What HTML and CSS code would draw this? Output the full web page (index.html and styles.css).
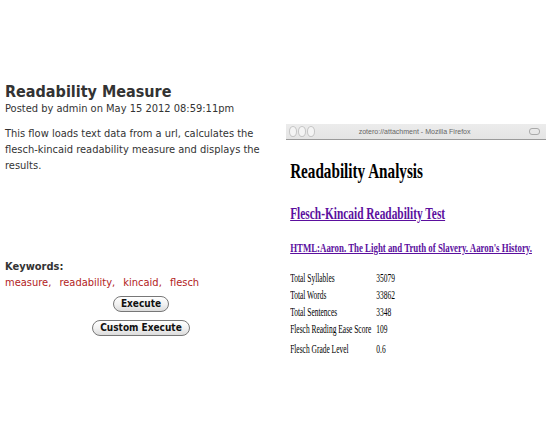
FILE: index.html
```html
<!DOCTYPE html>
<html>
<head>
<meta charset="utf-8">
<link rel="stylesheet" href="styles.css">
</head>
<body>
<div class="page">
  <div class="left">
    <h1 class="title">Readability Measure</h1>
    <div class="posted">Posted by admin on May 15 2012 08:59:11pm</div>
    <p class="desc">This flow loads text data from a url, calculates the flesch-kincaid readability measure and displays the results.</p>
    <div class="kw-label">Keywords:</div>
    <div class="kw-list"><a>measure</a>, <a>readability</a>, <a>kincaid</a>, <a>flesch</a></div>
    <div class="buttons">
      <button class="btn">Execute</button>
      <button class="btn">Custom Execute</button>
    </div>
  </div>
  <div class="right">
    <div class="win">
      <div class="titlebar">
        <div class="lights"><span></span><span></span><span></span></div>
        <div class="wtitle"><span>zotero://attachment - Mozilla Firefox</span></div>
        <div class="pillbox"><div class="pill"></div></div>
      </div>
      <div class="wcontent">
        <div class="scaled">
          <h1 class="ra">Readability Analysis</h1>
          <h2 class="fk"><a>Flesch-Kincaid Readability Test</a></h2>
          <h3 class="src"><a>HTML:Aaron. The Light and Truth of Slavery. Aaron's History.</a></h3>
          <table class="stats">
            <tr><td>Total Syllables</td><td>35079</td></tr>
            <tr><td>Total Words</td><td>33862</td></tr>
            <tr><td>Total Sentences</td><td>3348</td></tr>
            <tr><td>Flesch Reading Ease Score</td><td>109</td></tr>
            <tr><td>Flesch Grade Level</td><td>0.6</td></tr>
          </table>
        </div>
      </div>
    </div>
  </div>
</div>
</body>
</html>
```
FILE: styles.css
```css
html, body { margin: 0; padding: 0; background: #fff; }
body { width: 550px; height: 440px; overflow: hidden; font-family: "DejaVu Sans Condensed", "DejaVu Sans", sans-serif; color: #333; }
.page { display: flex; }
.left { width: 276px; padding: 82px 0 0 5px; }
.title { margin: 0; font-size: 16px; line-height: 20px; font-weight: bold; color: #333; }
.posted { font-size: 11px; line-height: 14px; color: #333; }
.desc { margin: 10px 0 0; font-size: 11px; line-height: 16px; color: #333; }
.kw-label { margin-top: 85px; font-size: 11px; font-weight: bold; line-height: 16px; }
.kw-list { font-size: 11px; line-height: 16px; color: #b22222; word-spacing: 5px; }
.kw-list a { color: #b22222; }
.buttons { display: flex; flex-direction: column; align-items: center; gap: 8px; margin-top: 5px; padding-right: 4px; }
.btn { font-family: "DejaVu Sans Condensed", "DejaVu Sans", sans-serif; font-size: 10px; font-weight: bold; color: #111; padding: 1px 7px; height: 16px; line-height: 12px; border: 1px solid #777; border-radius: 8px; background: linear-gradient(#fff, #f2f2f2 50%, #dcdcdc); }
.right { padding: 124px 0 0 5px; }
.win { width: 260px; }
.titlebar { height: 15px; background: linear-gradient(#ececec, #e4e4e4); border-bottom: 1px solid #9a9a9a; display: flex; align-items: center; padding: 0 6px 0 3px; }
.lights { display: flex; gap: 1px; width: 36px; }
.lights span { width: 6px; height: 9px; border: 1px solid #c4c4c4; border-radius: 50%; background: #f4f4f4; }
.wtitle { flex: 1; display: flex; justify-content: center; font-family: "Liberation Sans", Arial, sans-serif; font-size: 8px; color: #666; }
.wtitle span { display: inline-block; transform: scaleX(0.88); white-space: nowrap; }
.pillbox { width: 36px; display: flex; justify-content: flex-end; }
.pill { width: 9px; height: 5px; border: 1px solid #aaa; border-radius: 3px; }
.wcontent { width: 260px; overflow: hidden; }
.scaled { width: 376px; transform: scaleX(0.69); transform-origin: 0 0; padding-left: 6px; font-family: "Liberation Serif", "Times New Roman", serif; color: #000; }
.ra { margin: 18px 0 0; font-size: 22px; line-height: 26px; font-weight: bold; }
.fk { margin: 20px 0 0; font-size: 16.5px; line-height: 20px; font-weight: bold; }
.fk a, .src a { color: #5b0f9e; text-decoration: underline; }
.src { margin: 16px 0 0; font-size: 12.8px; line-height: 16px; font-weight: bold; white-space: nowrap; }
.stats { margin-top: 14px; border-collapse: collapse; font-size: 12.3px; transform: scaleX(0.88); transform-origin: 0 0; }
.stats td { padding: 0; height: 17px; line-height: 17px; white-space: nowrap; }
.stats td:first-child { width: 140px; padding-right: 2px; }
.stats tr:last-child td { height: 19px; line-height: 23px; }
```
